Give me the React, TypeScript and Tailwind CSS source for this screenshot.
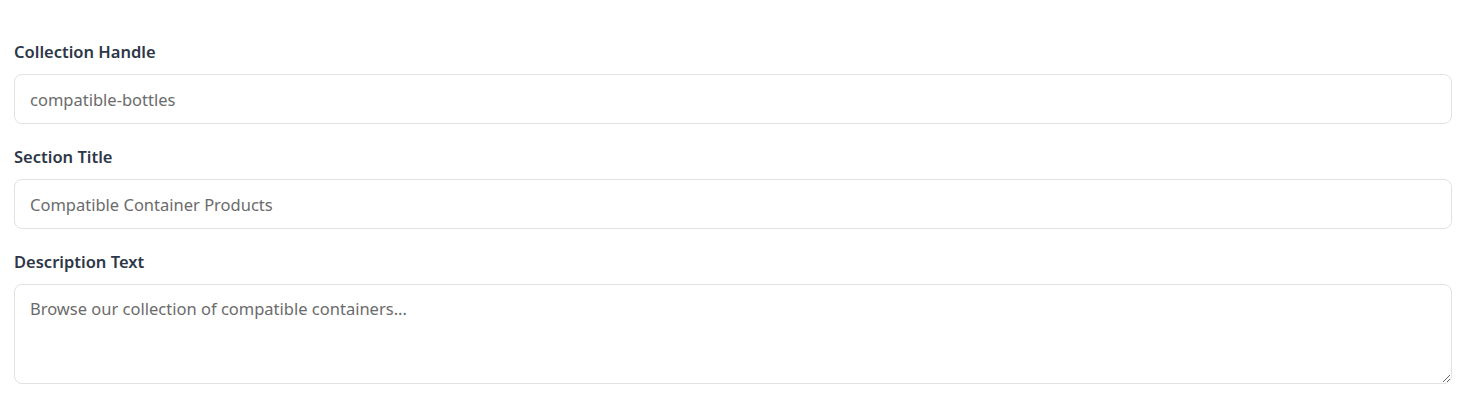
export default function App() {
  const font = { fontFamily: '"Segoe UI", "Noto Sans", sans-serif' };
  return (
    <div className="w-[1472px] h-[401px] bg-white font-['Segoe_UI','Noto_Sans',sans-serif]" style={font}>
      <div className="pt-[40px] pl-[14px] pr-[20px] flex flex-col gap-[21px]">
        <div className="flex flex-col">
          <label className="text-[16.5px] leading-[24px] font-semibold text-[#2d3748] mb-[10px]">Collection Handle</label>
          <input
            className="h-[50px] w-full rounded-[8px] border border-[#e2e2e2] px-[15px] text-[16.5px] text-[#6b6b6b] placeholder:text-[#6b6b6b] outline-none"
            style={font}
            placeholder="compatible-bottles"
          />
        </div>
        <div className="flex flex-col">
          <label className="text-[16.5px] leading-[24px] font-semibold text-[#2d3748] mb-[10px]">Section Title</label>
          <input
            className="h-[50px] w-full rounded-[8px] border border-[#e2e2e2] px-[15px] text-[16.5px] text-[#6b6b6b] placeholder:text-[#6b6b6b] outline-none"
            style={font}
            placeholder="Compatible Container Products"
          />
        </div>
        <div className="flex flex-col">
          <label className="text-[16.5px] leading-[24px] font-semibold text-[#2d3748] mb-[10px]">Description Text</label>
          <textarea
            className="h-[100px] w-full rounded-[8px] border border-[#e2e2e2] px-[15px] py-[12px] text-[16.5px] leading-[24px] text-[#6b6b6b] placeholder:text-[#6b6b6b] outline-none"
            style={font}
            placeholder="Browse our collection of compatible containers..."
          />
        </div>
      </div>
    </div>
  );
}
